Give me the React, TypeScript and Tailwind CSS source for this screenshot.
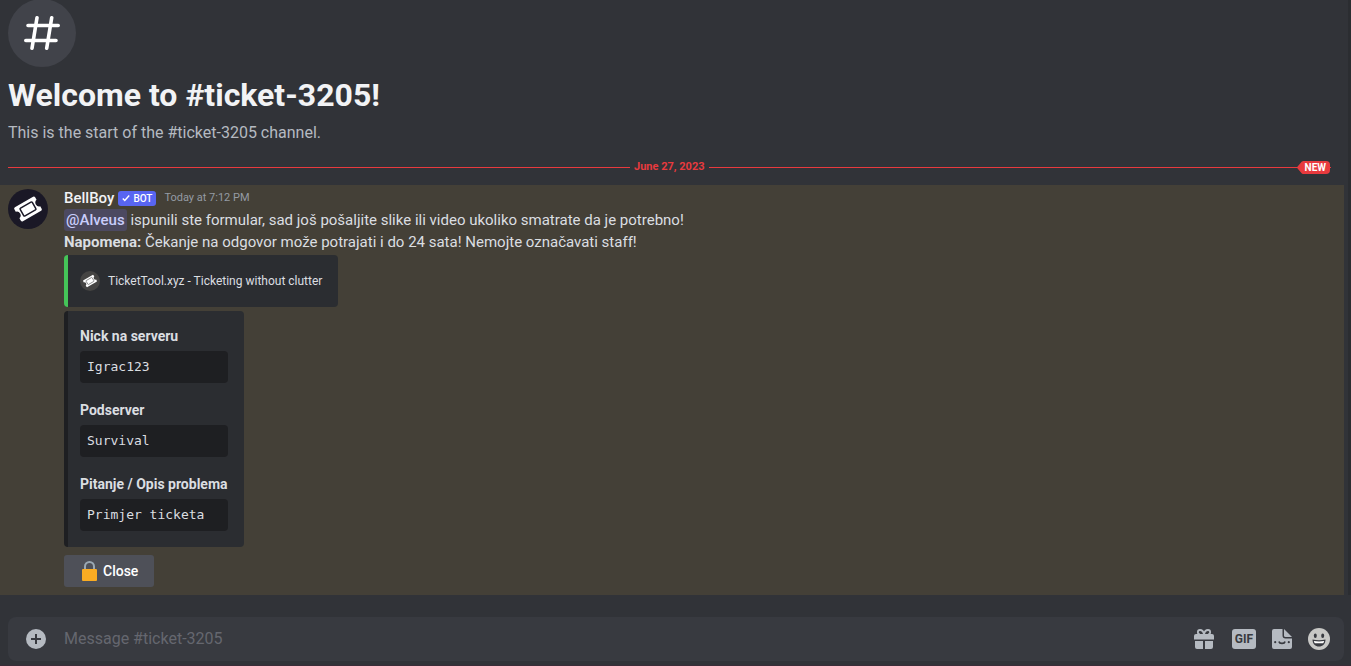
import type { ReactNode } from "react";

const fields = [
    { name: "Nick na serveru", value: "Igrac123" },
    { name: "Podserver", value: "Survival" },
    { name: "Pitanje / Opis problema", value: "Primjer ticketa" },
];

function TicketIcon({ className, hole }: { className: string; hole: string }) {
    return (
        <svg viewBox="0 0 40 40" className={className} aria-hidden="true">
            <g transform="rotate(-30 20 20)">
                <path
                    fill="#fff"
                    d="M9.5 12h21a1.5 1.5 0 0 1 1.5 1.5v2.8a3.8 3.8 0 0 0 0 7.4v2.8a1.5 1.5 0 0 1-1.5 1.5h-21A1.5 1.5 0 0 1 8 26.5v-2.8a3.8 3.8 0 0 0 0-7.4v-2.8A1.5 1.5 0 0 1 9.5 12Z"
                />
                <rect x="13" y="15.5" width="14" height="9" rx="1" fill="none" stroke={hole} strokeWidth="1.5" />
            </g>
        </svg>
    );
}

function Welcome() {
    return (
        <header className="px-2">
            <div className="-mt-px flex h-[68px] w-[68px] items-center justify-center rounded-full bg-[#41434a]">
                <svg
                    viewBox="0 0 36 34"
                    className="h-[34px] w-9"
                    fill="none"
                    stroke="#fff"
                    strokeWidth="3.6"
                    strokeLinecap="round"
                    aria-hidden="true"
                >
                    <path d="M13 1.8 8 32.2M27.700 1.800l-5 30.400M4 9.500h30.200M1.800 24.500h30.200" />
                </svg>
            </div>
            <h1 className="mt-2 text-[32px] leading-10 font-bold text-[#f2f3f5]">Welcome to #ticket-3205!</h1>
            <p className="mt-[6px] text-base leading-6 text-[#b5bac1]">This is the start of the #ticket-3205 channel.</p>
        </header>
    );
}

function DateDivider() {
    return (
        <div className="mt-[15px] flex h-[14px] items-center pr-[14px] pl-2 text-[#e83a3e]">
            <div className="h-px flex-1 bg-[#e83a3e]" />
            <time className="px-1 text-[11px] leading-[14px] font-bold">June 27, 2023</time>
            <div className="h-px flex-1 bg-[#e83a3e]" />
            <div className="relative -ml-[34px] flex items-center">
                <svg viewBox="0 0 8 13" className="h-[13px] w-2" fill="currentColor" aria-hidden="true">
                    <path d="M8 0H7C5.500 0 4.800.500 4 1.500L.600 5.500a1.500 1.500 0 0 0 0 2L4 11.500C4.800 12.500 5.500 13 7 13h1Z" />
                </svg>
                <span className="rounded-r bg-[#e83a3e] pr-1 text-[10px] leading-[13px] font-bold text-white">NEW</span>
            </div>
        </div>
    );
}

function Embed({ bar, children }: { bar: string; children: ReactNode }) {
    return <div className={`w-fit rounded border-l-4 bg-[#2b2d31] ${bar}`}>{children}</div>;
}

function Message() {
    return (
        <article className="mt-[11px] flex gap-4 bg-[#444037] px-2 pt-0.5 pb-2">
            <div className="mt-0.5 h-10 w-10 shrink-0 rounded-full bg-[#1a1826]">
                <TicketIcon className="h-10 w-10" hole="#1a1826" />
            </div>
            <div className="min-w-0 flex-1">
                <div className="flex h-[22px] items-center">
                    <span className="text-[15px] leading-[22px] font-medium text-[#f2f3f5]">BellBoy</span>
                    <span className="ml-1 flex h-[15px] items-center rounded-[3px] bg-[#5865f2] px-1 text-[10px] font-medium text-white">
                        <svg viewBox="0 0 10 10" className="mr-[3px] h-2 w-2" fill="none" stroke="#fff" strokeWidth="1.8" aria-hidden="true">
                            <path d="m1 5.500 2.500 2.500L9 2" />
                        </svg>
                        BOT
                    </span>
                    <time className="ml-2 text-[11px] leading-[22px] text-[#949ba4]">Today at 7:12 PM</time>
                </div>
                <p className="text-[15px] leading-[22px] text-[#dbdee1]">
                    <a href="#alveus" className="rounded-[3px] bg-[#4c4960] px-0.5 py-[2px] font-medium text-[#c9cdfb]">
                        @Alveus
                    </a>{" "}
                    ispunili ste formular, sad još pošaljite slike ili video ukoliko smatrate da je potrebno!
                    <br />
                    <strong>Napomena:</strong> Čekanje na odgovor može potrajati i do 24 sata! Nemojte označavati staff!
                </p>
                <div className="mt-0.5 flex flex-col gap-1">
                    <Embed bar="border-[#45c458]">
                        <div className="flex items-center gap-2 py-4 pr-4 pl-3">
                            <div className="h-5 w-5 rounded-full bg-[#454443]">
                                <TicketIcon className="h-5 w-5" hole="#777777" />
                            </div>
                            <span className="text-xs leading-5 text-[#dbdee1]">
                                TicketTool.xyz - Ticketing without clutter
                            </span>
                        </div>
                    </Embed>
                    <Embed bar="border-[#1e1f22]">
                        <dl className="flex flex-col gap-[18px] py-4 pr-4 pl-3">
                            {fields.map((field) => (
                                <div key={field.name}>
                                    <dt className="text-sm leading-[18px] font-bold text-[#dbdee1]">{field.name}</dt>
                                    <dd className="mt-[6px] rounded bg-[#1e1f22] p-[7px] font-['DejaVu_Sans_Mono',monospace] text-[13px] leading-[18px] text-[#dbdee1]">
                                        {field.value}
                                    </dd>
                                </div>
                            ))}
                        </dl>
                    </Embed>
                </div>
                <button type="button" className="mt-2 flex h-8 items-center rounded-[3px] bg-[#4e5058] px-4 text-sm font-medium text-white">
                    <svg viewBox="0 0 20 20" className="mr-[3px] h-5 w-5" aria-hidden="true">
                        <path d="M5 10V5.500a4.500 4.500 0 0 1 9 0V10" fill="none" stroke="#9aa8b3" strokeWidth="2" />
                        <rect x="2" y="8" width="15" height="12" rx="1" fill="#fbac22" />
                    </svg>
                    Close
                </button>
            </div>
        </article>
    );
}

function Composer() {
    return (
        <form className="mt-[22px] ml-2 flex h-11 items-center rounded-lg bg-[#383a40] pr-[14px] pl-[18px]">
            <button type="button" aria-label="Add attachment">
                <svg viewBox="0 0 20 20" className="h-5 w-5" aria-hidden="true">
                    <circle cx="10" cy="10" r="10" fill="#b5bac1" />
                    <path d="M10 5v10M5 10h10" stroke="#383a40" strokeWidth="2" />
                </svg>
            </button>
            <input
                type="text"
                aria-label="Message #ticket-3205"
                placeholder="Message #ticket-3205"
                className="ml-[18px] min-w-0 flex-1 bg-transparent text-base leading-[22px] text-[#dbdee1] outline-none placeholder:text-[#65676f]"
            />
            <div className="flex items-center gap-4">
                <button type="button" aria-label="Send a gift">
                    <svg viewBox="0 0 20 20" className="h-5 w-5" aria-hidden="true">
                        <path d="M9 12v8H3a2 2 0 0 1-2-2v-6ZM11 12h8v6a2 2 0 0 1-2 2h-6Z" fill="#b5bac1" />
                        <path d="M2 5h16a2 2 0 0 1 2 2v3.500H0V7a2 2 0 0 1 2-2Z" fill="#b5bac1" />
                        <path d="M10 5.500C9.500 2.500 8 1 6 1a2 2 0 0 0 0 4.300M10 5.500C10.500 2.500 12 1 14 1a2 2 0 0 1 0 4.300" fill="none" stroke="#b5bac1" strokeWidth="1.8" />
                    </svg>
                </button>
                <button
                    type="button"
                    className="ml-0.5 h-5 w-6 rounded-[3px] bg-[#b5bac1] text-center text-xs leading-5 font-bold text-[#383a40]"
                >
                    GIF
                </button>
                <button type="button" aria-label="Open stickers">
                    <svg viewBox="0 0 20 20" className="h-5 w-5" aria-hidden="true">
                        <path d="M2 0h8.500v6.500a3 3 0 0 0 3 3H20V18a2 2 0 0 1-2 2H2a2 2 0 0 1-2-2V2a2 2 0 0 1 2-2Z" fill="#b5bac1" />
                        <path d="M12 0l8 8h-6.500A1.500 1.500 0 0 1 12 6.500Z" fill="#b5bac1" />
                        <path d="M7 12.500c.500 2.500 5.500 2.500 6 0" fill="none" stroke="#383a40" strokeWidth="1.6" />
                        <circle cx="3.200" cy="13.200" r="1.100" fill="#383a40" />
                        <circle cx="16.800" cy="13.200" r="1.100" fill="#383a40" />
                    </svg>
                </button>
                <button type="button" aria-label="Select emoji">
                    <svg viewBox="0 0 22 22" className="h-[22px] w-[22px]" aria-hidden="true">
                        <circle cx="11" cy="11" r="11" fill="#c8c8c6" />
                        <ellipse cx="7.300" cy="7.800" rx="1.500" ry="2.200" fill="#383a40" />
                        <ellipse cx="14.700" cy="7.800" rx="1.500" ry="2.200" fill="#383a40" />
                        <path d="M4.500 11.500c4 1 9 1 13 0 0 4.500-3 7-6.500 7s-6.500-2.500-6.500-7Z" fill="#383a40" />
                        <path d="M5.800 13c3.500.600 7 .600 10.400 0-.200 1-.600 1.800-1 2.300H6.800c-.400-.500-.800-1.300-1-2.300Z" fill="#fff" />
                    </svg>
                </button>
            </div>
        </form>
    );
}

export default function App() {
    return (
        <main className="min-h-screen overflow-hidden border-b border-[#3a2c38] bg-[#313338] font-['Roboto',sans-serif]">
            <div className="flex">
                <div className="min-w-0 flex-1">
                    <Welcome />
                    <DateDivider />
                    <Message />
                </div>
                <div className="ml-1 w-[3px] bg-[#2b2d31]" />
            </div>
            <div className="pr-[7px]">
                <Composer />
            </div>
        </main>
    );
}
